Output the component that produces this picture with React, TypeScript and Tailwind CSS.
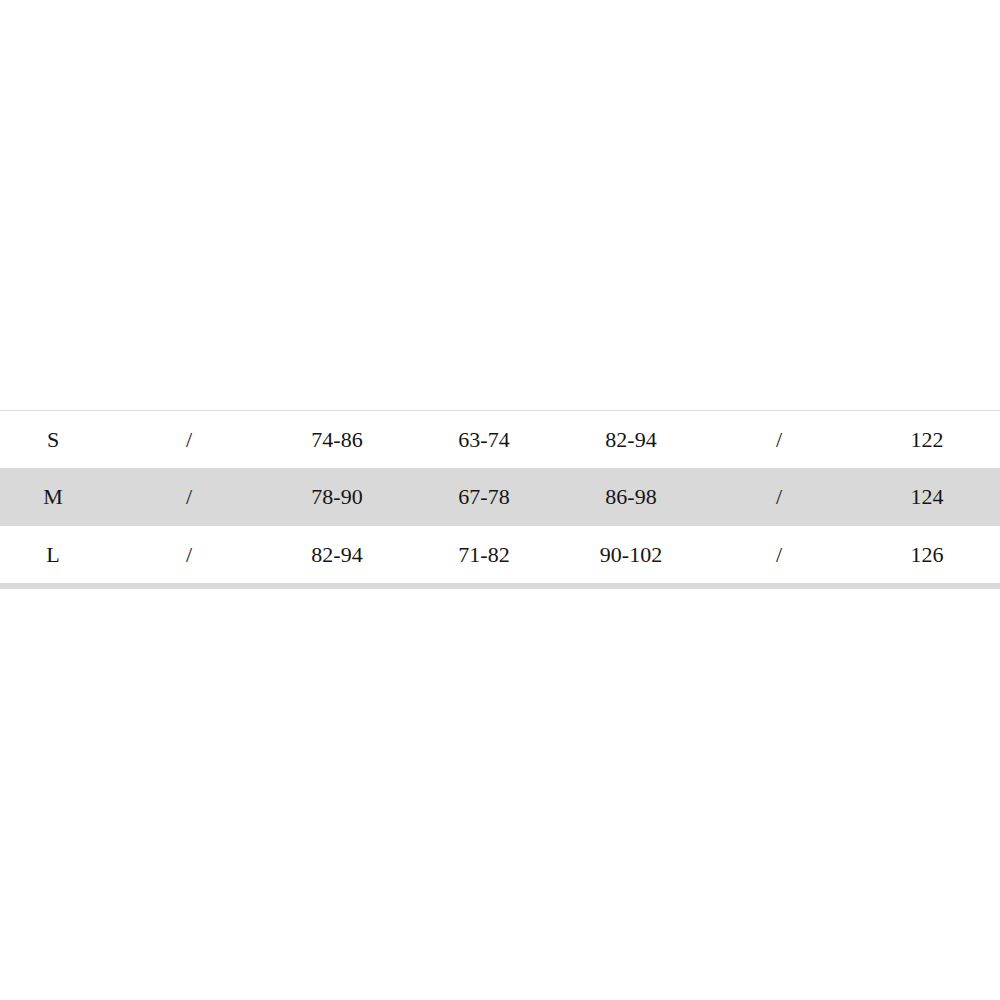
const rows = [
  ["S", "/", "74-86", "63-74", "82-94", "/", "122"],
  ["M", "/", "78-90", "67-78", "86-98", "/", "124"],
  ["L", "/", "82-94", "71-82", "90-102", "/", "126"],
];

export default function App() {
  return (
    <div className="flex h-[1000px] w-[1000px] flex-col bg-white pt-[410px] font-['Liberation_Serif',serif] text-[22px] text-[#151515]">
      <div className="h-[1px] bg-[#dcdcdc]" />
      {rows.map((row, i) => (
        <div
          key={row[0]}
          className={
            "grid grid-cols-[106px_166px_130px_164px_130px_166px_130px] items-center " +
            (i % 2 === 1 ? "h-[58px] bg-[#d9d9d9]" : "h-[57px] bg-white")
          }
        >
          {row.map((cell, j) => (
            <div key={j} className="text-center leading-none">
              {cell}
            </div>
          ))}
        </div>
      ))}
      <div className="h-[6px] bg-[#d9d9d9]" />
    </div>
  );
}
